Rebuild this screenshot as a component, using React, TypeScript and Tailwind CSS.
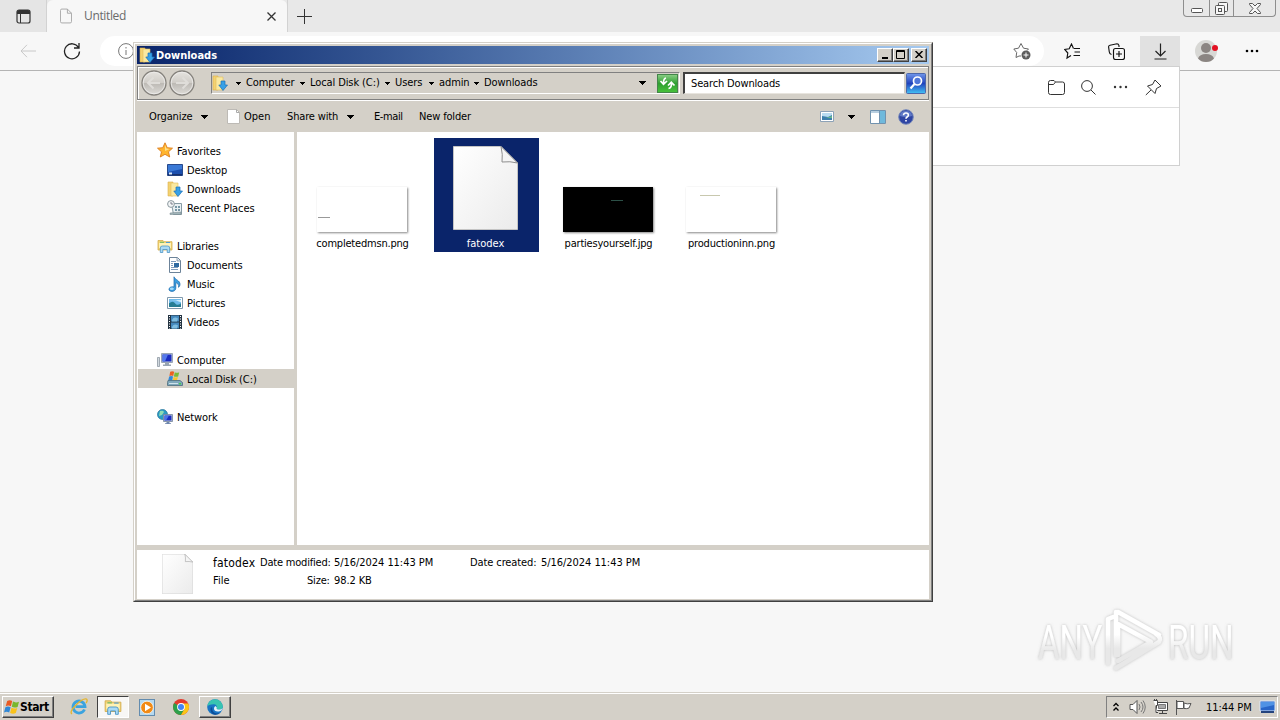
import type { ReactNode } from "react";

const UI = "font-['DejaVu_Sans_Condensed','DejaVu_Sans',sans-serif] [font-stretch:condensed] text-[11px] leading-[14px] text-black whitespace-nowrap";

function Caret({ small = false }: { small?: boolean }) {
  return small ? (
    <svg width="5" height="3" viewBox="0 0 5 3" shapeRendering="crispEdges"><path d="M0 0h5v1H4v1H3v1H2V2H1V1H0z" /></svg>
  ) : (
    <svg width="7" height="4" viewBox="0 0 7 4" shapeRendering="crispEdges"><path d="M0 0h7v1H6v1H5v1H4v1H3V3H2V2H1V1H0z" /></svg>
  );
}

function DownloadsIcon() {
  return (
    <svg width="16" height="16" viewBox="0 0 16 16">
      <path d="M1 1h5v14H1z" fill="#f3d271" stroke="#dcb04a" strokeWidth=".6" />
      <path d="M4 2h7v13H4z" fill="#fae9a0" stroke="#e0bd5c" strokeWidth=".6" />
      <path d="M9 6h4v4h2.5L11 15.5 6.8 10H9z" fill="#37a0e6" stroke="#1b70b8" strokeWidth=".7" />
    </svg>
  );
}

function StarIcon() {
  return (
    <svg className="-mt-[2px]" width="16" height="16" viewBox="0 0 16 16">
      <path d="M8 .8l2.2 4.9 5.3.5-4 3.6 1.2 5.2L8 12.3 3.3 15l1.2-5.2-4-3.6 5.3-.5z" fill="#ffb52e" stroke="#dc7d1c" strokeWidth=".9" />
      <path d="M8 3l1.4 3.6 3.2.4L8 9z" fill="#ffe08a" />
    </svg>
  );
}

function DesktopIcon() {
  return (
    <svg width="16" height="16" viewBox="0 0 16 16">
      <path d="M.5 2.5h15v11H.5z" fill="#1c4fae" stroke="#284a8c" />
      <path d="M1 3h14v4L1 10z" fill="#3a79d6" />
      <path d="M1 12h14v1.5H1z" fill="#16306d" />
      <path d="M2 10.5h3v2H2z" fill="#d5e6f8" />
    </svg>
  );
}

function RecentIcon() {
  return (
    <svg width="16" height="16" viewBox="0 0 16 16">
      <path d="M4.5 3.5h10v11h-8z" fill="#e9f0f3" stroke="#879ba4" />
      <path d="M8 6h2v2H8zM11 6h2v2h-2zM8 9h2v2H8zM11 9h2v2h-2z" fill="#7797a6" />
      <path d="M3 13l11-1v2.5H3z" fill="#a1b4b9" stroke="#708389" strokeWidth=".5" />
      <circle cx="4" cy="4" r="3.4" fill="#f2f5f6" stroke="#8b989e" />
      <path d="M4 2v2h2" fill="none" stroke="#667" strokeWidth=".8" />
    </svg>
  );
}

function LibrariesIcon({ size = 16 }: { size?: number }) {
  return (
    <svg width={size} height={size} viewBox="0 0 16 16">
      <path d="M1 2.5h5l1 1.2h8V12H1z" fill="#f2d575" stroke="#d4ad4e" strokeWidth=".8" />
      <path d="M2 5h12v5H2z" fill="#fff2b5" />
      <path d="M3 4.3h4" stroke="#68b765" />
      <path d="M9 4.5h4" stroke="#4e9bd4" />
      <path d="M3.3 14.5V10q0-2 2-2h5.4q2 0 2 2v4.5h-2.5v-3H5.8v3z" fill="#a9daf5" stroke="#4b94c5" strokeWidth=".8" />
    </svg>
  );
}

function DocumentIcon() {
  return (
    <svg width="16" height="16" viewBox="0 0 16 16">
      <path d="M2.5.5h8l3 3v12h-11z" fill="#fff" stroke="#6c8399" />
      <path d="M10 .8V4h3.2" fill="#dce7f1" stroke="#6c8399" strokeWidth=".7" />
      <path d="M4 4.5h5M4 6.5h2M4 8.5h2M4 10.5h7M4 12.5h7" stroke="#7d9bbc" />
      <path d="M7 6h5v4H7z" fill="#2d69a0" />
    </svg>
  );
}

function MusicIcon() {
  return (
    <svg width="16" height="16" viewBox="0 0 16 16">
      <path d="M7 .8c1 3 6 3.500 6 7.500 0 1.500-.8 2.500-1.500 3 .8-3-1.200-4-2.700-4.700v5.600c0 2-1.800 3.200-3.800 3.200S1.700 14.300 2 13c.3-1.800 2.700-2.600 5-2z" fill="#3b9ee0" stroke="#1865a9" strokeWidth=".7" />
      <ellipse cx="4.800" cy="12.800" rx="2" ry="1.200" fill="#a4dbfa" />
    </svg>
  );
}

function PictureIcon() {
  return (
    <svg width="16" height="16" viewBox="0 0 16 16">
      <path d="M.5 2.500h15v11H.5z" fill="#fff" stroke="#8099ac" />
      <path d="M2 4h12v8H2z" fill="#70bbea" />
      <path d="M2 8.200q4-3 6 0t6 0V12H2z" fill="#277d93" />
      <path d="M2 5.500h7l5 1.800V5z" fill="#d9f1fb" />
    </svg>
  );
}

function VideoIcon() {
  return (
    <svg width="16" height="16" viewBox="0 0 16 16">
      <path d="M1 1h14v14H1z" fill="#243442" />
      <path d="M4 1.500h8v6H4zM4 8.500h8v6H4z" fill="#4589bd" />
      <path d="M5 6q2-4 6-1.500l-1 3H5zM5 13q2-4 6-1.500l-1 3H5z" fill="#7fbde0" />
      <path d="M2.500 2v13M13.500 2v13" stroke="#fff" strokeWidth="1" strokeDasharray="1 1.500" />
    </svg>
  );
}

function ComputerIcon() {
  return (
    <svg width="16" height="16" viewBox="0 0 16 16">
      <path d="M.5 5.500h2v9h-2z" fill="#d2d9df" stroke="#8d98a2" strokeWidth=".8" />
      <path d="M4.500 1.500h11v9h-11z" fill="#c4cedb" stroke="#9aa6b5" />
      <path d="M5.500 2.500h9v7h-9z" fill="#1a2cc1" />
      <path d="M5.500 2.500h5.500l-3 7H5.500z" fill="#5479eb" />
      <path d="M8 11h4v1.500h2V14H6v-1.500h2z" fill="#98a5b2" />
    </svg>
  );
}

function WinFlag() {
  return (
    <svg width="16" height="16" viewBox="0 0 16 16">
      <path d="M3.200 2q2.600-1.700 5 0L6.900 7.300Q4.400 5.700 1.700 7.200z" fill="#e85a23" />
      <path d="M9 2.600q2.800 1.500 6 .1l-1.400 5.200q-3 1.300-5.800-.1z" fill="#79b72d" />
      <path d="M1.400 8.200q2.700-1.500 5.200.1L5.200 13.500Q2.700 11.900 0 13.400z" fill="#2f87d6" />
      <path d="M7.500 8.800q2.900 1.400 5.800.1l-1.500 5.200q-2.800 1.300-5.700-.1z" fill="#f9c21a" />
    </svg>
  );
}

function DiskIcon() {
  return (
    <svg width="16" height="16" viewBox="0 0 16 16">
      <path d="M3.200.8q2-1.300 4 0L6.200 5q-1.800-1.100-3.800 0z" fill="#ed6122" />
      <path d="M7.800 1.200q2 1 4.400 0l-1 4.200q-2 .8-4.300 0z" fill="#7abb36" />
      <path d="M2.200 5.600q2-1 3.800 0L5.200 9.500H1.200z" fill="#3289d8" />
      <path d="M6.600 6q2 .9 4.300 0L10 9.500H5.800z" fill="#fac52b" />
      <path d="M1 9.500h12l2.500 2v3H.5v-3z" fill="#7fa8bb" stroke="#4b6c7c" strokeWidth=".8" />
      <path d="M2 12.500h9" stroke="#cfe2ea" />
      <path d="M12 12h2v1.500h-2z" fill="#40d04c" />
    </svg>
  );
}

function NetworkIcon() {
  return (
    <svg width="16" height="16" viewBox="0 0 16 16">
      <circle cx="5.500" cy="5.500" r="5" fill="#2b9cc4" stroke="#1c6f96" strokeWidth=".7" />
      <path d="M3 2q3-1 4 1L5 6 2 7zM6 7l3-1v3l-3 1z" fill="#8fdcb4" />
      <path d="M6.500 5.500h9v7h-9z" fill="#c4cedb" stroke="#72839b" strokeWidth=".8" />
      <path d="M7.500 6.500h7v5h-7z" fill="#1a2cc1" />
      <path d="M7.500 6.500H12l-3 5H7.500z" fill="#4d72ea" />
      <path d="M9.500 13h3v1.200H14V15H8v-.8h1.500z" fill="#6e86ac" />
    </svg>
  );
}

function FileIcon({ w, h }: { w: number; h: number }) {
  return (
    <svg width={w} height={h} viewBox="0 0 65 84" preserveAspectRatio="none">
      <defs>
        <linearGradient id="paper" x1="0" y1="0" x2="1" y2="1">
          <stop offset="0" stopColor="#fff" />
          <stop offset=".4" stopColor="#f7f7f7" />
          <stop offset="1" stopColor="#ebebeb" />
        </linearGradient>
      </defs>
      <path d="M.5.5H48L64.500 17v66.500H.5z" fill="url(#paper)" stroke="#c4c4c4" />
      <path d="M48 .5q2 8 1 15.500 8-1 15.500 1z" fill="#f5f5f5" stroke="#8e8e8e" />
    </svg>
  );
}

type NavRow = { label: string; icon: ReactNode; root?: boolean; active?: boolean };

const navRows: (NavRow | null)[] = [
  { label: "Favorites", icon: <StarIcon />, root: true },
  { label: "Desktop", icon: <DesktopIcon /> },
  { label: "Downloads", icon: <DownloadsIcon /> },
  { label: "Recent Places", icon: <RecentIcon /> },
  null,
  { label: "Libraries", icon: <LibrariesIcon />, root: true },
  { label: "Documents", icon: <DocumentIcon /> },
  { label: "Music", icon: <MusicIcon /> },
  { label: "Pictures", icon: <PictureIcon /> },
  { label: "Videos", icon: <VideoIcon /> },
  null,
  { label: "Computer", icon: <ComputerIcon />, root: true },
  { label: "Local Disk (C:)", icon: <DiskIcon />, active: true },
  null,
  { label: "Network", icon: <NetworkIcon />, root: true },
];

function Browser() {
  return (
    <div className="flex h-[692px] flex-col bg-[#f7f7f7]">
      <div className="flex h-8 shrink-0 items-stretch justify-between bg-[#e8e8e8]">
        <div className="flex">
          <div className="flex w-[47px] items-center justify-center border-r border-[#d2d2d2] bg-[#e5e5e5] pl-px">
            <svg width="15" height="15" viewBox="0 0 15 15">
              <rect x="1" y="1" width="13" height="13" rx="2" fill="none" stroke="#333" strokeWidth="1.200" />
              <path d="M1 3q0-2 2-2h9q2 0 2 2v2H1z" fill="#333" />
              <path d="M4.500 5v9" stroke="#333" />
            </svg>
          </div>
          <div className="flex w-[240px] items-center rounded-t-md bg-[#f7f7f7] pl-[13px]">
            <svg width="12" height="16" viewBox="0 0 13 16" fill="none" stroke="#a5a5a5">
              <path d="M.5 2Q.5.5 2 .5h6L12.500 5v9q0 1.500-1.500 1.500H2Q.5 15.500.5 14z" />
              <path d="M8 .5V5h4.500" />
            </svg>
            <span className="ml-3 w-[183px] font-['Open_Sans',sans-serif] text-xs tracking-[-0.35px] text-[#6a6a6a]">Untitled</span>
            <svg width="9" height="9" viewBox="0 0 9 9" stroke="#333" strokeWidth="1.300"><path d="M.5.5l8 8M8.500.5l-8 8" /></svg>
          </div>
          <div className="flex w-[34px] items-center justify-center border-l border-[#d2d2d2]">
            <svg width="15" height="15" viewBox="0 0 15 15" stroke="#333"><path d="M7.500 0v15M0 7.500h15" /></svg>
          </div>
        </div>
        <div className="mr-1 flex h-[17px] w-[93px] rounded-b border border-t-0 border-[#8e8e8e]">
          <div className="flex w-[25px] items-center justify-center pt-1">
            <svg width="12" height="5" viewBox="0 0 12 5"><rect x=".5" y=".5" width="11" height="4" rx="1" fill="#fff" stroke="#555" /></svg>
          </div>
          <div className="flex w-[25px] items-center justify-center border-x border-[#8e8e8e]">
            <svg width="13" height="13" viewBox="0 0 13 13" fill="#f7f7f7" stroke="#555">
              <rect x="3.500" y=".5" width="9" height="9" rx="1" />
              <rect x=".5" y="3.500" width="9" height="9" rx="1" />
              <rect x="3.500" y="6.500" width="3" height="3" />
            </svg>
          </div>
          <div className="flex flex-1 items-center justify-center">
            <svg width="12" height="11" viewBox="0 0 12 11" fill="#f7f7f7" stroke="#555"><path d="M.5.5h3L6 3 8.500.5h3v1L8 5.500l3.500 4v1h-3L6 8l-2.500 2.500h-3v-1L4 5.500.5 1.500z" /></svg>
          </div>
        </div>
      </div>
      <div className="flex h-[39px] shrink-0 items-start border-b border-[#b4b4b4] pt-1">
        <div className="flex h-[30px] w-[100px] items-center gap-[26px] pl-5">
          <svg width="17" height="14" viewBox="0 0 17 14" fill="none" stroke="#c8c8c8"><path d="M16 7H1M7 .8L1 7l6 6.200" /></svg>
          <svg width="18" height="18" viewBox="0 0 18 18" fill="none" stroke="#222" strokeWidth="1.300"><path d="M15.500 5.500A7.500 7.500 0 1 0 16.500 9.500M16 1v5h-5" /></svg>
        </div>
        <div className="flex h-[30px] w-[944px] items-center justify-between rounded-full bg-white pr-[13px] pl-[18px]">
          <svg width="16" height="16" viewBox="0 0 16 16" fill="none" stroke="#777"><circle cx="8" cy="8" r="7.400" /><path d="M8 7v5M8 4v1.500" /></svg>
          <svg width="18" height="18" viewBox="0 0 18 18" fill="none" stroke="#686868">
            <path d="M8 14H6l-3 1.500.7-5L.8 7l4.700-.8L8 1.500l2.500 4.700 5 .8-1.500 1.500" />
            <circle cx="13" cy="13" r="4.500" fill="#5d5d5d" stroke="none" />
            <path d="M13 10.500v5M10.500 13h5" stroke="#fff" />
          </svg>
        </div>
        <div className="flex h-[30px] w-24 items-center gap-[27px] pl-5">
          <svg width="17" height="17" viewBox="0 0 17 17" fill="none" stroke="#111" strokeWidth="1.150"><path d="M7 12.500l-4 2.500.8-5L.7 6.500l4.500-.8L7.500 1l2 4.500M10 5.500h6M10.500 9H16M9.500 12.500H16" /></svg>
          <svg width="17" height="17" viewBox="0 0 17 17" fill="none" stroke="#111" strokeWidth="1.150"><path d="M3.500 11.500Q1.500 11 1.300 9L.6 4Q.5 2.500 2 2.200L9 .7q1.500 0 2 2V4" /><rect x="5.500" y="5.500" width="11" height="11" rx="2" /><path d="M11 8v6M8 11h6" /></svg>
        </div>
        <div className="flex h-[31px] w-10 items-center justify-center bg-[#e1e1e1]">
          <svg width="13" height="17" viewBox="0 0 13 17" fill="none" stroke="#222" strokeWidth="1.200"><path d="M6.500.5v12M1.500 8l5 5 5-5M.5 16h12" /></svg>
        </div>
        <div className="flex h-[30px] items-center pl-[14px]">
          <svg width="25" height="24" viewBox="0 0 25 24">
            <circle cx="12" cy="12" r="11" fill="#d8d8d5" />
            <circle cx="12" cy="9" r="5" fill="#8b8582" />
            <path d="M4 19.500q1.500-4.500 8-4.500t8 4.500q-3 3.500-8 3.500t-8-3.500z" fill="#8b8582" />
            <circle cx="21" cy="9" r="3" fill="#e31123" />
          </svg>
          <svg className="ml-[26px]" width="14" height="4" viewBox="0 0 14 4"><circle cx="2" cy="2" r="1.300" /><circle cx="7" cy="2" r="1.300" /><circle cx="12" cy="2" r="1.300" /></svg>
        </div>
      </div>
    </div>
  );
}

function DownloadsFlyout() {
  return (
    <div className="absolute top-[66px] left-[820px] h-[100px] w-[360px] border border-[#d0d0d0] bg-white">
      <div className="flex h-[41px] items-center justify-end gap-4 border-b border-[#dedede] pr-[17px]">
        <svg width="17" height="15" viewBox="0 0 17 15" fill="none" stroke="#333"><path d="M2.500.5h3.500l1.500 1.500h7q2 0 2 2v8.500q0 2-2 2h-12q-2 0-2-2v-10q0-2 2-2zM.6 4.500h4.900L7.500 2" /></svg>
        <svg width="15" height="15" viewBox="0 0 15 15" fill="none" stroke="#333"><circle cx="6" cy="6" r="5.400" /><path d="M10 10l4.500 4.500" /></svg>
        <svg className="mx-px" width="15" height="4" viewBox="0 0 15 4" fill="#333"><circle cx="2" cy="2" r="1.200" /><circle cx="7.500" cy="2" r="1.200" /><circle cx="13" cy="2" r="1.200" /></svg>
        <svg width="17" height="17" viewBox="0 0 17 17" fill="none" stroke="#333"><path d="M10 1l6 6-4.500 2.500-1.500 5L2.500 7l5-1.500zM6 11L.8 16" /></svg>
      </div>
    </div>
  );
}

function CaptionButton({ children, className = "" }: { children: ReactNode; className?: string }) {
  return (
    <div className={`flex h-[14px] w-4 items-center justify-center border border-t-white border-l-white border-r-[#404040] border-b-[#404040] bg-[#d4d0c8] shadow-[inset_-1px_-1px_0_#808080] ${className}`}>{children}</div>
  );
}

function NavRing({ flip = false }: { flip?: boolean }) {
  return (
    <svg width="26" height="26" viewBox="0 0 26 26" className={flip ? "-scale-x-100" : ""}>
      <defs>
        <linearGradient id="ring" x1="0" y1="0" x2="0" y2="1">
          <stop offset="0" stopColor="#e6e4e0" />
          <stop offset=".48" stopColor="#d0cdc8" />
          <stop offset=".52" stopColor="#bdbab5" />
          <stop offset="1" stopColor="#dedcd8" />
        </linearGradient>
      </defs>
      <circle cx="13" cy="13" r="12" fill="url(#ring)" stroke="#85827d" strokeWidth="1.300" />
      <circle cx="13" cy="13" r="10.800" fill="none" stroke="#efeeec" strokeWidth=".8" />
      <path d="M19 13H7M12.500 7.500L7 13l5.500 5.500" fill="none" stroke="#dfddd9" strokeWidth="2" />
    </svg>
  );
}

function Crumb({ label, width }: { label: string; width: string }) {
  return (
    <div className={`flex items-center ${width}`}>
      <span className="w-[10px]"><Caret small /></span>
      <span className="tracking-[-0.1px]">{label}</span>
    </div>
  );
}

function Thumb({ name, selected = false, children }: { name: string; selected?: boolean; children: ReactNode }) {
  return (
    <div className={`flex h-[114px] w-[105px] flex-col items-center justify-end ${selected ? "bg-[#0a246a] text-white" : ""}`}>
      {children}
      <span className={`mb-px -ml-[2px] ${selected ? "mt-[7px]" : "mt-[5px] tracking-[-0.2px]"}`}>{name}</span>
    </div>
  );
}

function ExplorerWindow() {
  return (
    <div className={`absolute top-[42px] left-[133px] h-[560px] w-[800px] border border-t-[#d4d0c8] border-l-[#d4d0c8] border-r-[#404040] border-b-[#404040] bg-[#d4d0c8] ${UI}`}>
      <div className="flex h-full flex-col border border-t-white border-l-white border-r-[#808080] border-b-[#808080] p-[2px]">
        <div className="flex h-[18px] shrink-0 items-center bg-gradient-to-r from-[#0a246a] to-[#a6caf0] pr-[2px] pl-[2px]">
          <DownloadsIcon />
          <span className="ml-px flex-1 pt-[2px] font-bold">
            <span className="text-white">Downloads</span>
          </span>
          <CaptionButton><svg className="mr-px mb-px" width="8" height="8"><path d="M1 6h6v2H1z" /></svg></CaptionButton>
          <CaptionButton className="mr-[2px]"><svg className="mr-px mb-px" width="9" height="9" viewBox="0 0 9 9" fill="none" stroke="#000"><path d="M.5 1.500h8M.5.5h8v8h-8z" /></svg></CaptionButton>
          <CaptionButton><svg className="mr-px mb-px" width="8" height="7" viewBox="0 0 8 7" stroke="#000" strokeWidth="1.500"><path d="M.5 0l7 7M7.500 0l-7 7" /></svg></CaptionButton>
        </div>

        <div className="mt-[2px] mb-px flex h-[34px] shrink-0 items-center border border-[#808080] pl-[3px] shadow-[inset_1px_1px_0_#fff,0_1px_0_#fff]">
          <div className="flex w-[70px] gap-[2px]"><NavRing /><NavRing flip /></div>
          <div className="flex h-[22px] w-[469px] items-center border border-t-[#808080] border-l-[#808080] border-r-white border-b-white">
            <DownloadsIcon />
            <div className="ml-2 flex flex-1">
              <Crumb label="Computer" width="w-16" />
              <Crumb label="Local Disk (C:)" width="w-[85px]" />
              <Crumb label="Users" width="w-11" />
              <Crumb label="admin" width="w-[45px]" />
              <Crumb label="Downloads" width="w-20" />
            </div>
            <span className="mr-[11px]"><Caret /></span>
            <svg className="mr-px" width="21" height="19" viewBox="0 0 21 19">
              <defs><linearGradient id="go" x1="0" y1="0" x2="0" y2="1"><stop offset="0" stopColor="#8ccf87" /><stop offset=".5" stopColor="#2f9f31" /><stop offset="1" stopColor="#49c33b" /></linearGradient></defs>
              <rect x=".5" y=".5" width="20" height="18" fill="url(#go)" stroke="#44854a" />
              <path d="M9 4Q6.500 4.500 6.500 9M3.500 7l3 3.300L10 7M11.500 14.500q3-.5 3-5M11 11.500l3.300-3.300 3.200 3.300" fill="none" stroke="#fff" strokeWidth="1.700" />
            </svg>
          </div>
          <div className="ml-[3px] flex h-[22px] w-[222px] items-center border border-t-2 border-l-2 border-t-[#404040] border-l-[#404040] border-r-[#d4d0c8] border-b-[#e8e5df] bg-white pl-[6px] tracking-[-0.15px]">Search Downloads</div>
          <svg width="21" height="21" viewBox="0 0 21 21">
            <defs><linearGradient id="find" x1="0" y1="0" x2="0" y2="1"><stop offset="0" stopColor="#7197ea" /><stop offset=".5" stopColor="#2143bd" /><stop offset="1" stopColor="#43c4f6" /></linearGradient></defs>
            <rect x="1.500" y=".5" width="19" height="20" rx="1" fill="url(#find)" stroke="#4c67ab" />
            <circle cx="12.500" cy="8" r="4" fill="#4f76d8" stroke="#fff" strokeWidth="1.700" />
            <path d="M9.500 11L5.500 15.500" stroke="#fff" strokeWidth="2.200" />
          </svg>
        </div>

        <div className="flex h-[31px] shrink-0 items-center pl-3">
          <span className="w-[52px] tracking-[-0.1px]">Organize</span>
          <span className="w-[26px]"><Caret /></span>
          <svg className="mr-1" width="13" height="15" viewBox="0 0 13 15"><path d="M.5.5h9l3 3v11H.5z" fill="#fff" stroke="#bdbab5" /><path d="M9.500.5v3h3" fill="none" stroke="#aaa" /></svg>
          <span className="w-[43px]">Open</span>
          <span className="w-[60px] tracking-[-0.15px]">Share with</span>
          <span className="w-[27px]"><Caret /></span>
          <span className="w-[45px] tracking-[-0.4px]">E-mail</span>
          <span className="flex-1 tracking-[-0.15px]">New folder</span>
          <svg width="14" height="11" viewBox="0 0 14 11"><path d="M.5.5h13v10H.5z" fill="#fff" stroke="#8da2b7" /><path d="M2 2h10v7H2z" fill="#3d7fac" /><path d="M2 2h10v2L8 6 2 5z" fill="#b9dcf1" /><path d="M6 7l6-2v2z" fill="#67b98b" /></svg>
          <span className="mr-[15px] ml-[14px]"><Caret /></span>
          <svg width="16" height="14" viewBox="0 0 16 14"><path d="M.5.5h15v13H.5z" fill="#fff" stroke="#7192ae" /><path d="M1 1h14v2H1z" fill="#b8cedf" /><path d="M10 1h5v12h-5z" fill="#6fb9dc" /><path d="M9.500 1v12" stroke="#7192ae" /></svg>
          <svg className="mr-[15px] ml-3" width="16" height="16" viewBox="0 0 16 16">
            <circle cx="8" cy="8" r="7.300" fill="#2f45a3" stroke="#7689bb" />
            <path d="M2 7q0-5 6-5t6 5q-6 2-12 0z" fill="#6079c6" />
            <path d="M5.500 6.200Q5.700 4 8 4t2.400 2q0 1.200-1.300 2Q8 8.700 8 9.700M8 11v1.500" fill="none" stroke="#fff" strokeWidth="1.600" />
          </svg>
        </div>

        <div className="flex h-[413px] shrink-0">
          <div className="w-[157px] bg-white pt-[9px] pl-px">
            {navRows.map((row, i) =>
              row ? (
                <div key={i} className={`flex h-[19px] items-center gap-1 ${row.root ? "pl-[19px]" : "pl-[29px]"} ${row.active ? "bg-[#d4d0c8]" : ""}`}>
                  {row.icon}
                  <span className="pt-[2px] tracking-[-0.1px]">{row.label}</span>
                </div>
              ) : (
                <div key={i} className="h-[19px]" />
              )
            )}
          </div>
          <div className="ml-[3px] flex flex-1 gap-[18px] bg-white pt-[6px] pl-[14px]">
            <Thumb name="completedmsn.png">
              <div className="mr-[3px] h-[45px] w-[90px] bg-white pt-[30px] pl-px shadow-[1px_1px_2px_#888]"><div className="h-px w-3 bg-[#999]" /></div>
            </Thumb>
            <Thumb name="fatodex" selected><div className="mr-[2px]"><FileIcon w={65} h={84} /></div></Thumb>
            <Thumb name="partiesyourself.jpg">
              <div className="mr-[3px] h-[45px] w-[90px] bg-black pt-[13px] pl-12 shadow-[1px_1px_2px_#888]"><div className="h-px w-3 bg-[#2c5047]" /></div>
            </Thumb>
            <Thumb name="productioninn.png">
              <div className="mr-[3px] h-[45px] w-[90px] bg-white pt-2 pl-[14px] shadow-[1px_1px_2px_#888]"><div className="h-px w-5 bg-[#c8c8ae]" /></div>
            </Thumb>
          </div>
        </div>

        <div className="mt-[5px] flex h-[49px] shrink-0 bg-white pt-1 pl-[25px]">
          <FileIcon w={31} h={40} />
          <div className="ml-5 flex flex-col gap-1 pt-[2px]">
            <div className="flex h-[14px] items-center">
              <span className="w-[47px] text-[12px] tracking-[0.2px]">fatodex</span>
              <span className="w-[74px] tracking-[-0.2px]">Date modified:</span>
              <span className="w-[136px] tracking-[-0.05px]">5/16/2024 11:43 PM</span>
              <span className="w-[71px] tracking-[-0.1px]">Date created:</span>
              <span className="tracking-[-0.05px]">5/16/2024 11:43 PM</span>
            </div>
            <div className="flex h-[14px] items-center">
              <span className="w-[94px]">File</span>
              <span className="w-[27px] tracking-[-0.2px]">Size:</span>
              <span className="tracking-[-0.1px]">98.2 KB</span>
            </div>
          </div>
        </div>
      </div>
    </div>
  );
}

function Watermark() {
  return (
    <svg className="absolute top-[603px] left-[1032px]" width="208" height="74" viewBox="0 0 208 74">
      <defs>
        <linearGradient id="mark" x1="0" y1="0" x2="0" y2="1">
          <stop offset=".4" stopColor="#fff" />
          <stop offset=".65" stopColor="#e8e8e8" />
        </linearGradient>
        <filter id="soft" x="-10%" y="-10%" width="120%" height="120%"><feDropShadow dx="0" dy="0" stdDeviation="1.600" floodColor="#888" floodOpacity=".55" /></filter>
      </defs>
      <g filter="url(#soft)" fill="url(#mark)">
        <g transform="translate(6 56) scale(.67 1)">
          <text x="0" y="0" fontFamily="Roboto, sans-serif" fontSize="48" textLength="96" lengthAdjust="spacingAndGlyphs">ANY</text>
        </g>
        <g transform="translate(136 56) scale(.67 1)">
          <text x="0" y="0" fontFamily="Roboto, sans-serif" fontSize="48" textLength="98" lengthAdjust="spacingAndGlyphs">RUN</text>
        </g>
        <g fill="none" stroke="url(#mark)" strokeWidth="4.500" strokeLinejoin="round" strokeLinecap="round">
          <path d="M86 52V21l33 18-33 19M76 60V16l5-2M86 9l41 23M84 9v43M84 65l43-26q3-4-3-8" />
        </g>
      </g>
    </svg>
  );
}

function TaskButton({ children, pressed = false }: { children: ReactNode; pressed?: boolean }) {
  return (
    <div className={`flex h-[22px] w-8 items-center justify-center border ${pressed ? "border-t-[#404040] border-l-[#404040] border-r-white border-b-white bg-[#f8f7f5]" : "border-t-white border-l-white border-r-[#404040] border-b-[#404040] shadow-[inset_-1px_-1px_0_#808080]"}`}>{children}</div>
  );
}

function Taskbar() {
  return (
    <div className={`flex h-7 items-center justify-between border-t border-[#d4d0c8] bg-[#d4d0c8] pt-px shadow-[inset_0_1px_0_#fff] ${UI}`}>
      <div className="flex items-center">
        <div className="ml-[2px] flex h-[22px] w-[52px] items-center border border-t-white border-l-white border-r-[#404040] border-b-[#404040] pl-px font-bold shadow-[inset_-1px_-1px_0_#808080]">
          <WinFlag />
          <span className="text-[12px] tracking-[-0.4px]">Start</span>
        </div>
        <svg className="ml-4" width="18" height="18" viewBox="0 0 18 18" fill="none">
          <path d="M14.500 11.500A6 6 0 1 1 15 8.700H5.500" stroke="#3ba3df" strokeWidth="2.800" />
          <path d="M2 16Q-1 14 6 7t10.500-6q1.500 1.500-.5 4" stroke="#e5b52d" strokeWidth="1.300" />
        </svg>
        <div className="ml-[9px]"><TaskButton pressed><LibrariesIcon size={18} /></TaskButton></div>
        <svg className="ml-[10px]" width="16" height="17" viewBox="0 0 16 17">
          <rect x=".5" y=".5" width="15" height="16" fill="#b5d9f0" stroke="#638caf" />
          <circle cx="8" cy="8.500" r="6.300" fill="#f18a16" stroke="#fff" strokeWidth=".7" />
          <path d="M6 4.800l6 3.700-6 3.700z" fill="#fff" />
        </svg>
        <svg className="ml-[18px]" width="16" height="16" viewBox="0 0 16 16">
          <circle cx="8" cy="8" r="8" fill="#e33b2e" />
          <path d="M8 8L1.100 4A8 8 0 0 0 8 16l3.500-6z" fill="#2da04b" />
          <path d="M8 8V4.500h7.200A8 8 0 0 1 8 16l3.500-6z" fill="#fbc617" />
          <circle cx="8" cy="8" r="3.900" fill="#fff" /><circle cx="8" cy="8" r="3" fill="#4285f4" />
        </svg>
        <div className="ml-[10px]">
          <TaskButton>
            <svg width="16" height="16" viewBox="0 0 16 16">
              <circle cx="8" cy="8" r="7.800" fill="#1874c4" />
              <path d="M.3 7A7.800 7.800 0 0 1 15.800 7.500q0 3-3.500 3-3.500 0-2.500-2Q10 5.500 7 5.200 3 5 .3 7z" fill="#38c4b1" />
              <path d="M5 8q0 6 5 6.500 3 0 4.500-1.500Q12 16 8 15.800 4 15 3.500 11 3 8.500 5 8z" fill="#0c4d99" />
              <path d="M9.800 8.500q-1 2 2.500 2 2.500 0 3.300-1.500-.5 3-3.600 3.500Q7 13 7 9.500q0-2 1.500-2.500z" fill="#e7f3fa" />
            </svg>
          </TaskButton>
        </div>
      </div>
      <div className="mr-[2px] flex h-[22px] w-[172px] items-center border border-t-[#808080] border-l-[#808080] border-r-white border-b-white pl-[6px]">
        <svg width="6" height="10" viewBox="0 0 6 10" fill="none" stroke="#000" strokeWidth="1.300"><path d="M.5 4L3 1.500 5.500 4M.5 8.500L3 6l2.500 2.500" /></svg>
        <svg className="ml-[10px]" width="18" height="16" viewBox="0 0 18 16" fill="none" stroke="#555">
          <path d="M1 5.500h3l4-4v13l-4-4H1z" fill="#fff" /><path d="M10 5q2 3 0 6M12 3q4 5 0 10M14 1.500q4.500 6.500 0 13" stroke="#777" />
        </svg>
        <svg className="ml-[5px]" width="17" height="16" viewBox="0 0 17 16" fill="#fff" stroke="#444">
          <path d="M4.500 3.500h11v8h-11z" /><path d="M6.500 5.500h7v4h-7z" fill="#aaa" stroke="#777" /><path d="M7 14.500h8M10.500 12v2" /><path d="M1.500 1.500h4v5H4v7h2M2.500 0v2M4.500 0v2" />
        </svg>
        <svg className="ml-[6px]" width="17" height="16" viewBox="0 0 17 16" fill="#fff" stroke="#555">
          <path d="M1.500 1v15" /><path d="M9 4q3 1.500 7 .5l-2 4.500q-2 1-5 .5z" /><path d="M2 2.500h6.500v7H2z" />
        </svg>
        <span className="ml-[14px] w-[53px] pt-px tracking-[-0.05px]">11:44 PM</span>
        <svg width="17" height="14" viewBox="0 0 17 14"><path d="M1 1h15v10H1z" fill="#2865c8" stroke="#dfe8f4" /><path d="M2 2h13v3L2 8z" fill="#4f92e5" /><path d="M2 11h13v2H2z" fill="#24437d" /></svg>
      </div>
    </div>
  );
}

export default function App() {
  return (
    <main className="relative h-[720px] w-[1280px] overflow-hidden bg-[#f7f7f7]">
      <Browser />
      <Taskbar />
      <DownloadsFlyout />
      <Watermark />
      <ExplorerWindow />
    </main>
  );
}
